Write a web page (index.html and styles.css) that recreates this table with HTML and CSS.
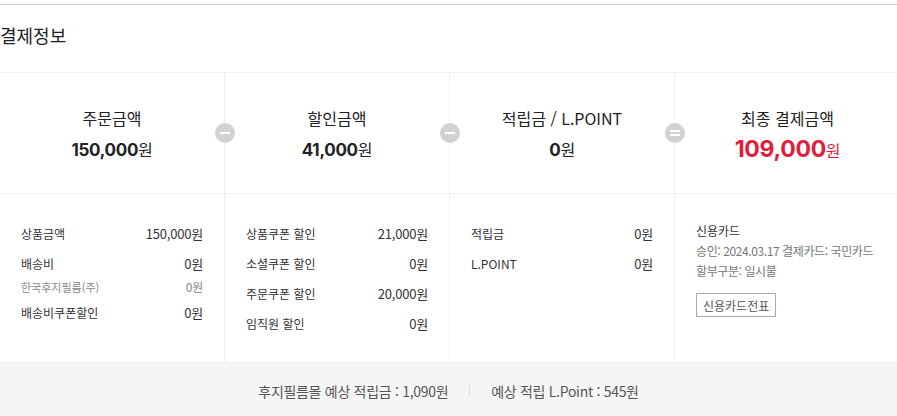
FILE: index.html
```html
<!DOCTYPE html>
<html lang="ko">
<head>
    <meta charset="UTF-8">
    <meta name="viewport" content="width=device-width, initial-scale=1.0">
    <title>결제정보</title>
    <link rel="stylesheet" href="styles.css">
</head>
<body>
    <div class="pay-info">
        <h2 class="pay-title">결제정보</h2>

        <div class="pay-summary">
            <div class="sum-col">
                <div class="sum-label">주문금액</div>
                <div class="sum-amount">150,000<span class="won">원</span></div>
                <span class="sign sign-minus"></span>
            </div>
            <div class="sum-col">
                <div class="sum-label">할인금액</div>
                <div class="sum-amount">41,000<span class="won">원</span></div>
                <span class="sign sign-minus"></span>
            </div>
            <div class="sum-col">
                <div class="sum-label">적립금 / L.POINT</div>
                <div class="sum-amount">0<span class="won">원</span></div>
                <span class="sign sign-equal"></span>
            </div>
            <div class="sum-col">
                <div class="sum-label">최종 결제금액</div>
                <div class="sum-amount total">109,000<span class="won">원</span></div>
            </div>
        </div>

        <div class="pay-detail">
            <div class="detail-col">
                <div class="row"><span>상품금액</span><span class="val">150,000원</span></div>
                <div class="row"><span>배송비</span><span class="val">0원</span></div>
                <div class="row sub"><span>한국후지필름(주)</span><span class="val">0원</span></div>
                <div class="row"><span>배송비쿠폰할인</span><span class="val">0원</span></div>
            </div>
            <div class="detail-col">
                <div class="row"><span>상품쿠폰 할인</span><span class="val">21,000원</span></div>
                <div class="row"><span>소셜쿠폰 할인</span><span class="val">0원</span></div>
                <div class="row"><span>주문쿠폰 할인</span><span class="val">20,000원</span></div>
                <div class="row"><span>임직원 할인</span><span class="val">0원</span></div>
            </div>
            <div class="detail-col">
                <div class="row"><span>적립금</span><span class="val">0원</span></div>
                <div class="row"><span>L.POINT</span><span class="val">0원</span></div>
            </div>
            <div class="detail-col card-col">
                <p class="card-name">신용카드</p>
                <p class="card-text">승인: 2024.03.17 결제카드: 국민카드</p>
                <p class="card-text">할부구분: 일시불</p>
                <button type="button" class="slip-btn">신용카드전표</button>
            </div>
        </div>

        <div class="pay-footer">
            <span>후지필름몰 예상 적립금 : 1,090원</span>
            <span class="bar"></span>
            <span>예상 적립 L.Point : 545원</span>
        </div>
    </div>
</body>
</html>
```

FILE: styles.css
```css
body {
    font-family: "Noto Sans CJK KR", "Noto Sans", sans-serif;
    margin: 0;
    padding: 0;
    background-color: #fff;
    color: #333;
    overflow: hidden;
}
.pay-info {
    width: 900px;
    padding-top: 4px;
}
.pay-title {
    margin: 0;
    border-top: 1px solid #ccc;
    border-bottom: 1px solid #eee;
    height: 67px;
    line-height: 60px;
    font-size: 18px;
    font-weight: normal;
    color: #222;
}
.pay-summary,
.pay-detail {
    display: grid;
    grid-template-columns: repeat(4, 225px);
    border-bottom: 1px solid #eee;
}
.sum-col {
    position: relative;
    height: 120px;
    padding-top: 33px;
    box-sizing: border-box;
    text-align: center;
    border-right: 1px solid #eee;
}
.sum-col:last-child,
.detail-col:last-child {
    border-right: none;
}
.sum-label {
    font-size: 16px;
    line-height: 24px;
    color: #222;
}
.sum-amount {
    margin-top: 5px;
    font-family: Inter, "Noto Sans CJK KR", sans-serif;
    font-size: 17px;
    font-weight: bold;
    line-height: 28px;
    color: #222;
    letter-spacing: -0.3px;
}
.sum-amount .won {
    font-family: "Noto Sans CJK KR", sans-serif;
    font-weight: normal;
    font-size: 16px;
}
.sum-amount.total {
    font-size: 23px;
    color: #e31c3d;
}
.sum-amount.total .won {
    font-size: 16px;
}
.sign {
    position: absolute;
    top: 50px;
    right: -11px;
    width: 20px;
    height: 20px;
    border-radius: 50%;
    background-color: #d2d2d2;
    z-index: 1;
}
.sign::before,
.sign::after {
    content: "";
    position: absolute;
    left: 5px;
    width: 10px;
    height: 2px;
    background-color: #fff;
}
.sign-minus::before {
    top: 9px;
}
.sign-minus::after {
    display: none;
}
.sign-equal::before {
    top: 7px;
}
.sign-equal::after {
    top: 11px;
}
.detail-col {
    height: 168px;
    padding: 30px 21px 0;
    box-sizing: border-box;
    border-right: 1px solid #eee;
    font-size: 12px;
}
.row {
    display: flex;
    justify-content: space-between;
    line-height: 20px;
    margin-bottom: 10px;
    color: #333;
}
.row .val {
    font-size: 13px;
    letter-spacing: -0.2px;
}
.row.sub {
    font-size: 11px;
    line-height: 16px;
    margin-top: -5px;
    margin-bottom: 8px;
    color: #888;
}
.row.sub .val {
    font-size: 12px;
}
.card-col {
    padding-top: 27px;
}
.card-col p {
    margin: 0;
    line-height: 20px;
    white-space: nowrap;
}
.card-name {
    color: #333;
}
.card-text {
    color: #777;
    letter-spacing: -0.4px;
}
.slip-btn {
    margin-top: 12px;
    padding: 0 6px;
    height: 24px;
    border: 1px solid #aaa;
    background: #fff;
    color: #555;
    font-family: inherit;
    font-size: 12px;
    cursor: pointer;
}
.pay-footer {
    width: 897px;
    height: 55px;
    display: flex;
    justify-content: center;
    align-items: center;
    background-color: #f5f5f5;
    font-size: 14px;
    color: #555;
    letter-spacing: -0.3px;
}
.pay-footer .bar {
    width: 1px;
    height: 11px;
    margin: 0 21px;
    background-color: #ddd;
}
```
